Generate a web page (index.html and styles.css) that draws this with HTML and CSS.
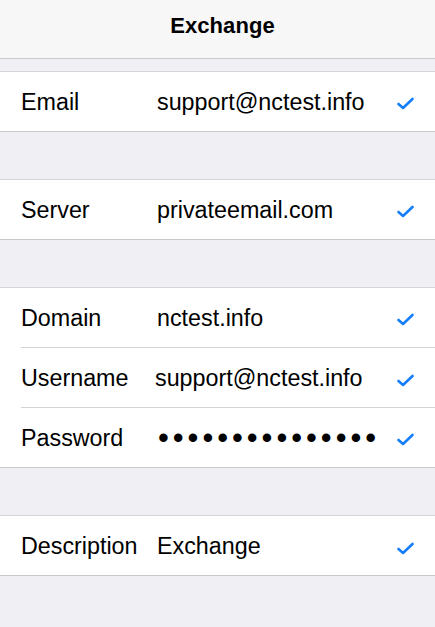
FILE: index.html
```html
<!DOCTYPE html>
<html>
<head>
<meta charset="utf-8">
<link rel="stylesheet" href="styles.css">
</head>
<body>
<header class="navbar"><h1 class="title">Exchange</h1></header>
<main class="content">
  <section class="group">
    <div class="row"><span class="label">Email</span><span class="value">support@nctest.info</span><svg class="check" viewBox="0 0 17 13"><path d="M1.5 7 L6 11 L15.5 2"/></svg></div>
  </section>
  <section class="group">
    <div class="row"><span class="label">Server</span><span class="value">privateemail.com</span><svg class="check" viewBox="0 0 17 13"><path d="M1.5 7 L6 11 L15.5 2"/></svg></div>
  </section>
  <section class="group">
    <div class="row"><span class="label">Domain</span><span class="value">nctest.info</span><svg class="check" viewBox="0 0 17 13"><path d="M1.5 7 L6 11 L15.5 2"/></svg></div>
    <div class="row"><span class="label">Username</span><span class="value value-tight">support@nctest.info</span><svg class="check check-low" viewBox="0 0 17 13"><path d="M1.5 7 L6 11 L15.5 2"/></svg></div>
    <div class="row"><span class="label">Password</span><span class="value secure">•••••••••••••••</span><svg class="check" viewBox="0 0 17 13"><path d="M1.5 7 L6 11 L15.5 2"/></svg></div>
  </section>
  <section class="group">
    <div class="row"><span class="label">Description</span><span class="value">Exchange</span><svg class="check check-low" viewBox="0 0 17 13"><path d="M1.5 7 L6 11 L15.5 2"/></svg></div>
  </section>
</main>
</body>
</html>
```

FILE: styles.css
```css
html, body {
  margin: 0;
  padding: 0;
  background: #efeff4;
  font-family: "Liberation Sans", Arial, sans-serif;
  color: #000;
}

.navbar {
  height: 58px;
  background: #f7f7f8;
  border-bottom: 1px solid #c8c7cc;
  display: flex;
  align-items: center;
  justify-content: center;
  padding-left: 10px;
}

.title {
  margin: 0;
  font-size: 22px;
  font-weight: bold;
  letter-spacing: 0.1px;
  position: relative;
  top: -3px;
}

.content {
  padding-top: 12px;
  display: flex;
  flex-direction: column;
  gap: 47px;
}

.group {
  background: #fff;
  border-top: 1px solid #d4d3d8;
  border-bottom: 1px solid #c8c7cc;
  padding-left: 21px;
}

.row {
  height: 59px;
  display: grid;
  grid-template-columns: 136px 1fr 17px;
  align-items: center;
  padding-right: 21px;
  font-size: 23.3px;
}

.row + .row {
  border-top: 1px solid #d4d3d8;
}

.label,
.value {
  white-space: nowrap;
  position: relative;
  top: 1px;
}

.value-tight {
  margin-left: -2px;
}

.secure {
  font-size: 31px;
  letter-spacing: 3.95px;
  margin-left: 1px;
  top: 0;
}

.check {
  width: 17px;
  height: 13px;
  position: relative;
  top: 2px;
  fill: none;
  stroke: #157efb;
  stroke-width: 2.6;
  stroke-linecap: round;
  stroke-linejoin: round;
}

.check-low {
  top: 3px;
}
```
